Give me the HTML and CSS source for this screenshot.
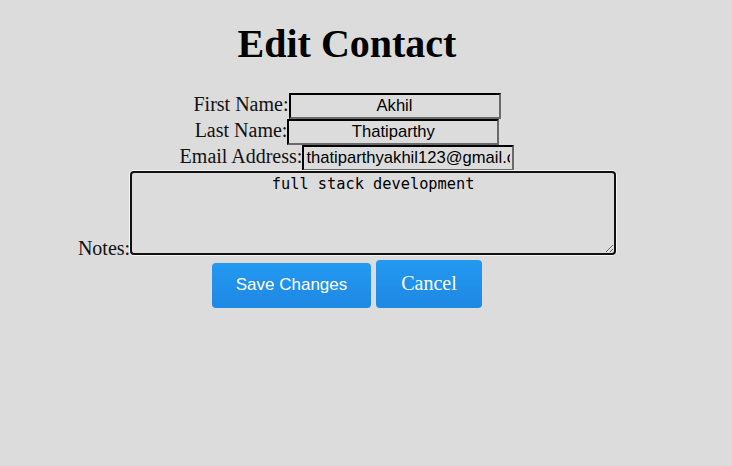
FILE: index.html
```html
<!DOCTYPE html>
<html>
<head>
<meta charset="utf-8">
<link rel="stylesheet" href="styles.css">
</head>
<body>
<h1 class="title">Edit Contact</h1>
<form class="form">
  <label>First Name:</label><input class="field" type="text" value="Akhil"><br>
  <label>Last Name:</label><input class="field" type="text" value="Thatiparthy"><br>
  <label>Email Address:</label><input class="field email" type="text" value="thatiparthyakhil123@gmail.com"><br>
  <label>Notes:</label><textarea class="notes">full stack development</textarea><br>
  <button type="button" class="btn save">Save Changes</button>
  <button type="button" class="btn cancel">Cancel</button>
</form>
</body>
</html>
```
FILE: styles.css
```css
html, body {
  background: #dcdcdc;
}
body {
  margin: 8px;
  padding-right: 38px;
  font-family: "Liberation Serif", serif;
  font-size: 20px;
  color: #111;
  text-align: center;
}
.title {
  font-size: 40px;
  margin: 12px 0 25.5px;
  color: #000;
}
.form {
  line-height: 23px;
}
.field {
  font-family: "Liberation Sans", Arial, sans-serif;
  font-size: 16.6px;
  width: 212px;
  height: 26px;
  box-sizing: border-box;
  padding: 1px 2px;
  border: 2px inset #767676;
  border-top-color: #333;
  border-left-color: #333;
  border-right-color: #6a6a6a;
  border-bottom-color: #6a6a6a;
  background: transparent;
  color: #000;
  text-align: center;
  vertical-align: baseline;
}
.email {
  text-align: left;
}
.notes {
  font-family: "DejaVu Sans Mono", monospace;
  font-size: 15.3px;
  width: 486px;
  height: 84px;
  box-sizing: border-box;
  border: 2px solid #111;
  border-radius: 4px;
  background: transparent;
  text-align: center;
  padding: 2px;
  margin-top: 0;
  vertical-align: baseline;
  box-shadow: 0 0 0 1px #f4f4f4;
}
.btn {
  border: none;
  border-radius: 4px;
  color: #fff;
  background: linear-gradient(#2399f0, #1e88e5);
  margin-top: 0;
  cursor: pointer;
}
.save {
  font-family: "Liberation Sans", Arial, sans-serif;
  font-size: 17px;
  width: 159px;
  height: 45px;
}
.cancel {
  font-family: "Liberation Serif", serif;
  font-size: 20px;
  width: 106px;
  height: 48px;
}
```
